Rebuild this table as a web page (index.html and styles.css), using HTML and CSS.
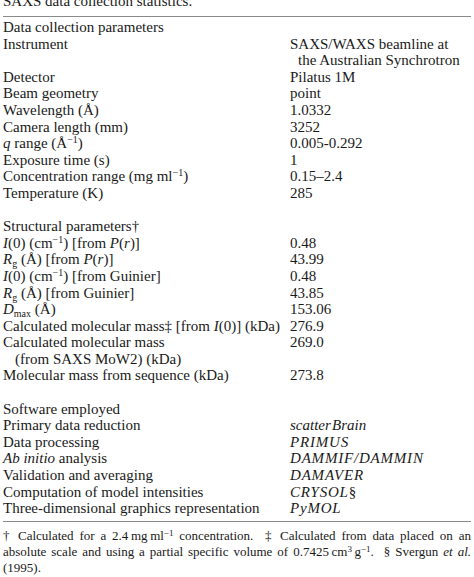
FILE: index.html
```html
<!DOCTYPE html>
<html>
<head>
<meta charset="utf-8">
<link rel="stylesheet" href="styles.css">
</head>
<body>
<div class="page">
  <div class="caption">SAXS data collection statistics.</div>
  <table class="stats">
    <tbody>
      <tr><td class="head" colspan="2">Data collection parameters</td></tr>
      <tr><td>Instrument</td><td>SAXS/WAXS beamline at<br><span class="cont">the Australian Synchrotron</span></td></tr>
      <tr><td>Detector</td><td>Pilatus 1M</td></tr>
      <tr><td>Beam geometry</td><td>point</td></tr>
      <tr><td>Wavelength (Å)</td><td>1.0332</td></tr>
      <tr><td>Camera length (mm)</td><td>3252</td></tr>
      <tr><td><i>q</i> range (Å<sup>−1</sup>)</td><td>0.005-0.292</td></tr>
      <tr><td>Exposure time (s)</td><td>1</td></tr>
      <tr><td>Concentration range (mg ml<sup>−1</sup>)</td><td>0.15–2.4</td></tr>
      <tr><td>Temperature (K)</td><td>285</td></tr>
      <tr class="gap"><td colspan="2"></td></tr>
      <tr><td class="head" colspan="2">Structural parameters†</td></tr>
      <tr><td><i>I</i>(0) (cm<sup>−1</sup>) [from <i>P</i>(<i>r</i>)]</td><td>0.48</td></tr>
      <tr><td><i>R</i><sub>g</sub> (Å) [from <i>P</i>(<i>r</i>)]</td><td>43.99</td></tr>
      <tr><td><i>I</i>(0) (cm<sup>−1</sup>) [from Guinier]</td><td>0.48</td></tr>
      <tr><td><i>R</i><sub>g</sub> (Å) [from Guinier]</td><td>43.85</td></tr>
      <tr><td><i>D</i><sub>max</sub> (Å)</td><td>153.06</td></tr>
      <tr><td>Calculated molecular mass‡ [from <i>I</i>(0)] (kDa)</td><td>276.9</td></tr>
      <tr><td>Calculated molecular mass<br><span class="cont2">(from SAXS MoW2) (kDa)</span></td><td>269.0</td></tr>
      <tr><td>Molecular mass from sequence (kDa)</td><td>273.8</td></tr>
      <tr class="gap"><td colspan="2"></td></tr>
      <tr><td class="head" colspan="2">Software employed</td></tr>
      <tr><td>Primary data reduction</td><td><i>scatter</i>&#8202;<i>Brain</i></td></tr>
      <tr><td>Data processing</td><td><i class="caps">PRIMUS</i></td></tr>
      <tr><td><i>Ab initio</i> analysis</td><td><i class="caps">DAMMIF/DAMMIN</i></td></tr>
      <tr><td>Validation and averaging</td><td><i class="caps">DAMAVER</i></td></tr>
      <tr><td>Computation of model intensities</td><td><i class="caps">CRYSOL</i>§</td></tr>
      <tr class="last"><td>Three-dimensional graphics representation</td><td><i class="caps">PyMOL</i></td></tr>
    </tbody>
  </table>
  <p class="notes">† Calculated for a 2.4&#8201;mg&#8201;ml<sup>−1</sup> concentration. &nbsp;‡ Calculated from data placed on an absolute scale and using a partial specific volume of 0.7425&#8201;cm<sup>3</sup>&#8201;g<sup>−1</sup>. &nbsp;§ Svergun <i>et al.</i> (1995).</p>
</div>
</body>
</html>
```
FILE: styles.css
```css
html, body {
  margin: 0;
  padding: 0;
  background: #ffffff;
}
body {
  font-family: "Liberation Serif", "Times New Roman", serif;
  color: #1a1a1a;
  overflow: hidden;
}
.page {
  width: 474px;
  padding: 0 3px;
  box-sizing: border-box;
}
.caption {
  font-size: 15px;
  line-height: 17px;
  margin-top: -7px;
  padding-bottom: 6px;
  border-bottom: 1px solid #8a8a8a;
}
.stats {
  width: 100%;
  border-collapse: collapse;
  font-size: 15px;
  line-height: 16.6px;
  border-bottom: 1px solid #8a8a8a;
  margin-top: 2px;
}
.stats td {
  padding: 0;
  vertical-align: top;
  white-space: nowrap;
}
.stats td:first-child {
  width: 287px;
}
.stats .last td {
  padding-bottom: 4px;
}
.gap td {
  height: 16.6px;
}
.cont {
  padding-left: 8px;
}
.cont2 {
  padding-left: 12px;
}
.caps {
  letter-spacing: 0.8px;
}
sup, sub {
  font-size: 10px;
  line-height: 0;
}
sup {
  vertical-align: 5px;
}
sub {
  vertical-align: -3px;
}
.notes {
  margin: 6px 0 0;
  font-size: 13px;
  line-height: 16px;
  text-align: justify;
}
.notes sup {
  font-size: 9px;
  vertical-align: 4px;
}
```
